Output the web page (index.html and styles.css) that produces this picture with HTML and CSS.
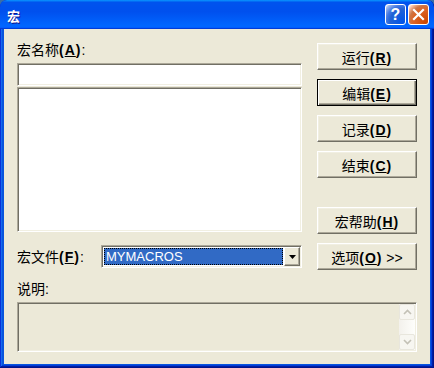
FILE: index.html
```html
<!DOCTYPE html>
<html lang="zh-CN">
  <head>
    <meta charset="UTF-8" />
    <title>宏</title>
    <link rel="stylesheet" href="styles.css">
  </head>
  <body>
    <div class="window">
      <div class="titlebar">
        <span class="title">宏</span>
        <div class="tb-buttons">
          <span class="tb-btn help">?</span>
          <span class="tb-btn close">
            <svg width="13" height="13" viewBox="0 0 13 13">
              <path d="M2 2 L11 11 M11 2 L2 11" stroke="#fff" stroke-width="2.2" stroke-linecap="square" />
            </svg>
          </span>
        </div>
      </div>

      <div class="client">
        <div class="main">
          <div class="left">
            <div class="label">宏名称<b>(<u>A</u>)</b>:</div>
            <div class="field name-input"></div>
            <div class="field list"></div>
            <div class="file-row">
              <span class="label file-label">宏文件<b>(<u>F</u>)</b>:</span>
              <div class="field combo">
                <span class="combo-value">MYMACROS</span>
                <span class="combo-btn">
                  <svg width="7" height="4" viewBox="0 0 7 4">
                    <path d="M0 0 H7 L3.5 4 Z" fill="#000" />
                  </svg>
                </span>
              </div>
            </div>
          </div>

          <div class="right">
            <button class="btn">运行<b>(<u>R</u>)</b></button>
            <button class="btn default">编辑<b>(<u>E</u>)</b></button>
            <button class="btn">记录<b>(<u>D</u>)</b></button>
            <button class="btn">结束<b>(<u>C</u>)</b></button>
            <button class="btn help-btn">宏帮助<b>(<u>H</u>)</b></button>
            <button class="btn">选项<b>(<u>O</u>)</b> &gt;&gt;</button>
          </div>
        </div>

        <div class="label desc-label">说明:</div>
        <div class="field desc">
          <div class="scrollbar">
            <span class="sb-btn">
              <svg width="9" height="6" viewBox="0 0 9 6">
                <path d="M1 5 L4.5 1.5 L8 5" fill="none" stroke="#c3c1b6" stroke-width="1.6" />
              </svg>
            </span>
            <span class="sb-track"></span>
            <span class="sb-btn">
              <svg width="9" height="6" viewBox="0 0 9 6">
                <path d="M1 1 L4.5 4.5 L8 1" fill="none" stroke="#c3c1b6" stroke-width="1.6" />
              </svg>
            </span>
          </div>
        </div>
      </div>
    </div>
  </body>
</html>
```

FILE: styles.css
```css
* {
  box-sizing: border-box;
  margin: 0;
  padding: 0;
}
body {
  background: #3a6ea5;
  font-family: "Liberation Sans", "Noto Sans CJK SC", sans-serif;
  font-size: 14px;
  color: #000;
}
.window {
  width: 434px;
  height: 368px;
  display: flex;
  flex-direction: column;
  background: #0855dd;
  border-radius: 7px 7px 0 0;
  box-shadow: inset -1px -1px #00138c, inset 1px 1px #0831d9,
    inset -2px -2px #001ea0, inset 2px 2px #166aee,
    inset -3px -3px #003bda, inset 3px 3px #0855dd;
  overflow: hidden;
}
.titlebar {
  height: 29px;
  display: flex;
  align-items: center;
  justify-content: space-between;
  padding: 0 5px 0 7px;
  border-radius: 7px 7px 0 0;
  background: linear-gradient(
    180deg,
    #0997ff,
    #0053ee 8%,
    #0050ee 40%,
    #06f 88%,
    #06f 93%,
    #005bff 95%,
    #003dd7 96%,
    #003dd7
  );
}
.title {
  color: #fff;
  font-family: "Noto Sans CJK SC", sans-serif;
  font-weight: bold;
  font-size: 13px;
  text-shadow: 1px 1px #0f1089;
  padding-top: 1px;
}
.tb-buttons {
  display: flex;
  gap: 2px;
}
.tb-btn {
  width: 21px;
  height: 21px;
  border: 1px solid #fff;
  border-radius: 3px;
  display: flex;
  align-items: center;
  justify-content: center;
  color: #fff;
}
.help {
  background: radial-gradient(circle at 90% 90%, #0054e9 0, #2263d5 55%, #4479e4 70%, #a3bbec 90%, #fff 100%);
  font-family: "Liberation Sans", sans-serif;
  font-weight: bold;
  font-size: 16px;
}
.close {
  background: radial-gradient(circle at 90% 90%, #cc4600 0, #dc6527 55%, #cd7546 70%, #ffccb2 90%, #fff 100%);
}
.client {
  flex: 1;
  margin: 0 4px 4px;
  background: #ece9d8;
  padding: 13px 13px 0;
  display: flex;
  flex-direction: column;
}
.main {
  display: flex;
  gap: 15px;
  align-items: flex-start;
}
.left {
  width: 285px;
  display: flex;
  flex-direction: column;
}
.label {
  height: 16px;
  line-height: 16px;
  white-space: nowrap;
}
b {
  font-weight: bold;
  letter-spacing: 1px;
}
.left > .label {
  margin-bottom: 5px;
}
.field {
  background: #fff;
  border-style: solid;
  border-width: 1px;
  border-color: #aca899 #fff #fff #aca899;
  box-shadow: inset 1px 1px #716f64, inset -1px -1px #f1efe2;
}
.name-input {
  height: 23px;
}
.list {
  height: 145px;
  margin-top: 1px;
}
.file-row {
  display: flex;
  align-items: center;
  margin-top: 13px;
}
.file-label {
  width: 84px;
}
.combo {
  width: 201px;
  height: 23px;
  display: flex;
  align-items: center;
  padding: 1px 1px 1px 2px;
}
.combo-value {
  flex: 1;
  height: 17px;
  margin-right: 1px;
  background: #316ac5;
  outline: 1px dotted #000;
  outline-offset: -1px;
  color: #fff;
  font-size: 13px;
  line-height: 17px;
  padding-left: 2px;
}
.combo-btn {
  width: 16px;
  height: 19px;
  background: #ece9d8;
  border-style: solid;
  border-width: 1px;
  border-color: #fff #716f64 #716f64 #fff;
  box-shadow: inset -1px -1px #aca899;
  display: flex;
  align-items: center;
  justify-content: center;
}
.right {
  width: 100px;
  display: flex;
  flex-direction: column;
  gap: 9px;
  margin-top: 1px;
}
.btn {
  height: 27px;
  width: 100px;
  background: #ece9d8;
  font-family: "Liberation Sans", "Noto Sans CJK SC", sans-serif;
  font-size: 14px;
  color: #000;
  border-style: solid;
  border-width: 1px;
  border-color: #fff #716f64 #716f64 #fff;
  box-shadow: inset -1px -1px #aca899, inset 1px 1px #f1efe2;
}
.btn.default {
  border: 1px solid #000;
  box-shadow: inset 1px 1px #fff, inset -1px -1px #716f64, inset -2px -2px #aca899;
}
.help-btn {
  margin-top: 20px;
}
.desc-label {
  margin-top: 11px;
}
.desc {
  height: 50px;
  margin-top: 5px;
  background: #ece9d8;
  display: flex;
  justify-content: flex-end;
  padding: 1px 1px 1px 0;
}
.scrollbar {
  width: 16px;
  display: flex;
  flex-direction: column;
  background: linear-gradient(90deg, #f3f1ec, #fefefb);
}
.sb-btn {
  height: 16px;
  border: 1px solid #e8e6dd;
  border-radius: 2px;
  background: #f7f6f1;
  display: flex;
  align-items: center;
  justify-content: center;
}
.sb-track {
  flex: 1;
}
```
